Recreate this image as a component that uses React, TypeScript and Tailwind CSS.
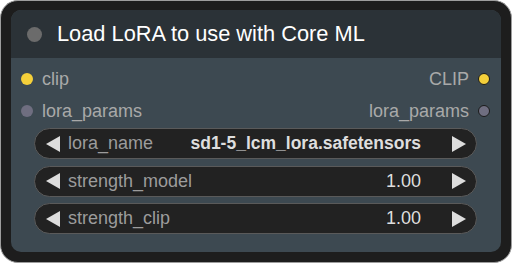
const font = { fontFamily: '"Liberation Sans", Arial, sans-serif' };

type Widget = { label: string; value: string; bold?: boolean };

const widgets: Widget[] = [
  { label: "lora_name", value: "sd1-5_lcm_lora.safetensors", bold: true },
  { label: "strength_model", value: "1.00" },
  { label: "strength_clip", value: "1.00" },
];

function Slot({ name, output, color }: { name: string; output: string; color: string }) {
  return (
    <div className="flex h-[32px] items-center justify-between pl-[10px] pr-[11px]">
      <div className="flex items-center">
        <span className={`h-[12px] w-[12px] rounded-full ${color}`} />
        <span className="ml-[9px] text-[18px] text-[#a9a9a9]">{name}</span>
      </div>
      <div className="flex items-center">
        <span className="mr-[9px] text-[18px] text-[#a9a9a9]">{output}</span>
        <span className={`h-[12px] w-[12px] rounded-full border border-[#1b1b1b] ${color}`} />
      </div>
    </div>
  );
}

function Arrow({ left }: { left?: boolean }) {
  return (
    <svg width="14" height="16" viewBox="0 0 14 16" className="shrink-0">
      <polygon points={left ? "14,0 14,16 0,8" : "0,0 0,16 14,8"} fill="#dddddd" />
    </svg>
  );
}

function WidgetRow({ label, value, bold }: Widget) {
  return (
    <div className="flex h-[31px] items-center rounded-full border border-[#5a5a5a] bg-[#222222] pl-[11px] pr-[10px]">
      <Arrow left />
      <span className="ml-[8px] text-[18px] text-[#9c9c9c]">{label}</span>
      <span
        className={`ml-auto mr-[31px] text-[#dedede] ${bold ? "text-[17.5px] font-bold" : "text-[18px]"}`}
      >
        {value}
      </span>
      <Arrow />
    </div>
  );
}

export default function App() {
  return (
    <div className="h-[263px] w-[512px] bg-white" style={font}>
      <div className="h-full w-full rounded-[18px] border border-[#9d9d9d] bg-[#1d1d1d] px-[10px] pt-[9px] pb-[10px]">
        <div className="flex h-full flex-col overflow-hidden rounded-[10px] bg-[#3d4951]">
          <div className="flex h-[48px] shrink-0 items-center bg-[#2b3237] pl-[16px]">
            <span className="h-[15px] w-[15px] rounded-full bg-[#6b6b6b]" />
            <span className="ml-[15px] text-[21.8px] text-white">Load LoRA to use with Core ML</span>
          </div>
          <div className="pt-[5px]">
            <Slot name="clip" output="CLIP" color="bg-[#f5d03a]" />
            <Slot name="lora_params" output="lora_params" color="bg-[#6f6e80]" />
          </div>
          <div className="mt-[1px] flex flex-col gap-[6.5px] pl-[23px] pr-[24px]">
            {widgets.map((w) => (
              <WidgetRow key={w.label} {...w} />
            ))}
          </div>
        </div>
      </div>
    </div>
  );
}
